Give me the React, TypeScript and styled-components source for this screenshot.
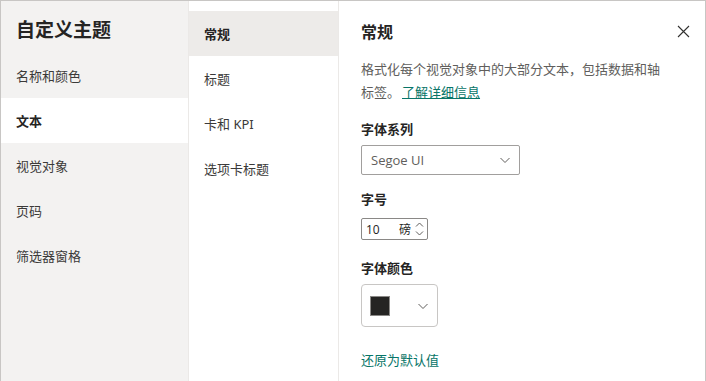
import styled, { createGlobalStyle } from 'styled-components';

const GlobalStyle = createGlobalStyle`
  html, body {
    margin: 0;
    padding: 0;
    background: #ffffff;
  }
  body {
    font-family: 'Noto Sans', 'Noto Sans CJK SC', sans-serif;
    color: #323130;
  }
`;

const leftItems = ['名称和颜色', '文本', '视觉对象', '页码', '筛选器窗格'];
const middleItems = ['常规', '标题', '卡和 KPI', '选项卡标题'];

function Chevron({ size = 12 }: { size?: number }) {
  return (
    <svg width={size} height={size} viewBox='0 0 12 12' fill='none'>
      <path d='M1.5 4 L6 8.5 L10.5 4' stroke='#605e5c' strokeWidth='1' />
    </svg>
  );
}

export default function App() {
  return (
    <>
      <GlobalStyle />
      <Frame>
        <SideNav>
          <SideTitle>自定义主题</SideTitle>
          {leftItems.map((item) => (
            <SideItem key={item} $active={item === '文本'}>
              {item}
            </SideItem>
          ))}
        </SideNav>
        <SubNav>
          {middleItems.map((item) => (
            <SubItem key={item} $active={item === '常规'}>
              {item}
            </SubItem>
          ))}
        </SubNav>
        <Content>
          <Header>
            <Heading>常规</Heading>
            <CloseButton aria-label='关闭'>
              <svg width='13' height='13' viewBox='0 0 13 13'>
                <path
                  d='M1 1 L12 12 M12 1 L1 12'
                  stroke='#323130'
                  strokeWidth='1.1'
                />
              </svg>
            </CloseButton>
          </Header>
          <Description>
            <DescLine>格式化每个视觉对象中的大部分文本，包括数据和轴</DescLine>
            <DescLine>
              标签。<LearnLink href='#'>了解详细信息</LearnLink>
            </DescLine>
          </Description>

          <FieldLabel $top={16}>字体系列</FieldLabel>
          <Select>
            <span>Segoe UI</span>
            <Chevron />
          </Select>

          <FieldLabel $top={15}>字号</FieldLabel>
          <NumberBox>
            <NumberValue>10</NumberValue>
            <Unit>磅</Unit>
            <Spinner>
              <svg width='9' height='18' viewBox='0 0 9 18' fill='none'>
                <path d='M1 6.5 L4.5 3 L8 6.5' stroke='#605e5c' strokeWidth='1' />
                <path d='M1 11.5 L4.5 15 L8 11.5' stroke='#605e5c' strokeWidth='1' />
              </svg>
            </Spinner>
          </NumberBox>

          <FieldLabel $top={19}>字体颜色</FieldLabel>
          <ColorButton>
            <Swatch $color='#252423' />
            <Chevron />
          </ColorButton>

          <ResetLink href='#'>还原为默认值</ResetLink>
        </Content>
      </Frame>
    </>
  );
}

const Frame = styled.div`
  display: flex;
  width: 706px;
  height: 381px;
  box-sizing: border-box;
  border: 1px solid #c8c6c4;
  border-bottom: none;
  overflow: hidden;
`;

const SideNav = styled.nav`
  width: 187px;
  flex-shrink: 0;
  background: #f3f2f1;
  display: flex;
  flex-direction: column;
`;

const SideTitle = styled.h1`
  margin: 0;
  height: 52px;
  padding: 16px 0 0 15px;
  box-sizing: border-box;
  font-size: 19px;
  line-height: 26px;
  font-weight: 700;
  color: #252423;
`;

const SideItem = styled.div<{ $active?: boolean }>`
  height: 45px;
  display: flex;
  align-items: center;
  padding-left: 15px;
  font-size: 13px;
  font-weight: ${({ $active }) => ($active ? 700 : 400)};
  color: ${({ $active }) => ($active ? '#252423' : '#3b3a39')};
  background: ${({ $active }) => ($active ? '#ffffff' : 'transparent')};
`;

const SubNav = styled.nav`
  width: 149px;
  flex-shrink: 0;
  padding-top: 10px;
  border-left: 1px solid #ebe9e7;
  border-right: 1px solid #ebe9e7;
  display: flex;
  flex-direction: column;
`;

const SubItem = styled.div<{ $active?: boolean }>`
  height: 45px;
  display: flex;
  align-items: center;
  padding-left: 15px;
  font-size: 13px;
  font-weight: ${({ $active }) => ($active ? 700 : 400)};
  color: ${({ $active }) => ($active ? '#252423' : '#3b3a39')};
  background: ${({ $active }) => ($active ? '#edebe9' : 'transparent')};
`;

const Content = styled.section`
  flex: 1;
  padding: 18px 0 0 22px;
  display: flex;
  flex-direction: column;
  align-items: flex-start;
`;

const Header = styled.div`
  align-self: stretch;
  display: flex;
  align-items: center;
  justify-content: space-between;
  padding-right: 15px;
  height: 24px;
`;

const Heading = styled.h2`
  margin: 0;
  font-size: 16px;
  font-weight: 700;
  color: #252423;
`;

const CloseButton = styled.button`
  border: none;
  background: none;
  padding: 0;
  display: flex;
  cursor: pointer;
`;

const Description = styled.div`
  margin-top: 15px;
  font-size: 13px;
  line-height: 23px;
  color: #605e5c;
`;

const DescLine = styled.div`
  white-space: nowrap;
`;

const LearnLink = styled.a`
  color: #077568;
  text-decoration: underline;
  margin-left: 2px;
`;

const FieldLabel = styled.div<{ $top: number }>`
  margin-top: ${({ $top }) => $top}px;
  font-size: 13px;
  line-height: 18px;
  font-weight: 700;
  color: #252423;
`;

const Select = styled.div`
  margin-top: 7px;
  width: 159px;
  height: 30px;
  box-sizing: border-box;
  border: 1px solid #a19f9d;
  border-radius: 2px;
  display: flex;
  align-items: center;
  justify-content: space-between;
  padding: 0 8px 0 9px;
  font-family: 'Open Sans', 'Noto Sans', sans-serif;
  font-size: 13px;
  color: #605e5c;
`;

const NumberBox = styled.div`
  margin-top: 10px;
  width: 67px;
  height: 22px;
  box-sizing: border-box;
  border: 1px solid #8a8886;
  border-radius: 2px;
  display: flex;
  align-items: center;
  padding: 0 3px 0 4px;
  font-size: 12px;
  color: #252423;
`;

const NumberValue = styled.span`
  flex: 1;
  font-family: 'Open Sans', 'Noto Sans', sans-serif;
`;

const Unit = styled.span`
  margin-right: 4px;
`;

const Spinner = styled.span`
  display: flex;
`;

const ColorButton = styled.div`
  margin-top: 7px;
  width: 77px;
  height: 43px;
  box-sizing: border-box;
  border: 1px solid #c8c6c4;
  border-radius: 4px;
  display: flex;
  align-items: center;
  justify-content: space-between;
  padding: 0 8px 0 8px;
`;

const Swatch = styled.span<{ $color: string }>`
  width: 20px;
  height: 20px;
  box-sizing: border-box;
  background: ${({ $color }) => $color};
  border: 1px solid #8a8886;
`;

const ResetLink = styled.a`
  margin-top: 24px;
  font-size: 13px;
  line-height: 18px;
  color: #077568;
  text-decoration: none;
`;
